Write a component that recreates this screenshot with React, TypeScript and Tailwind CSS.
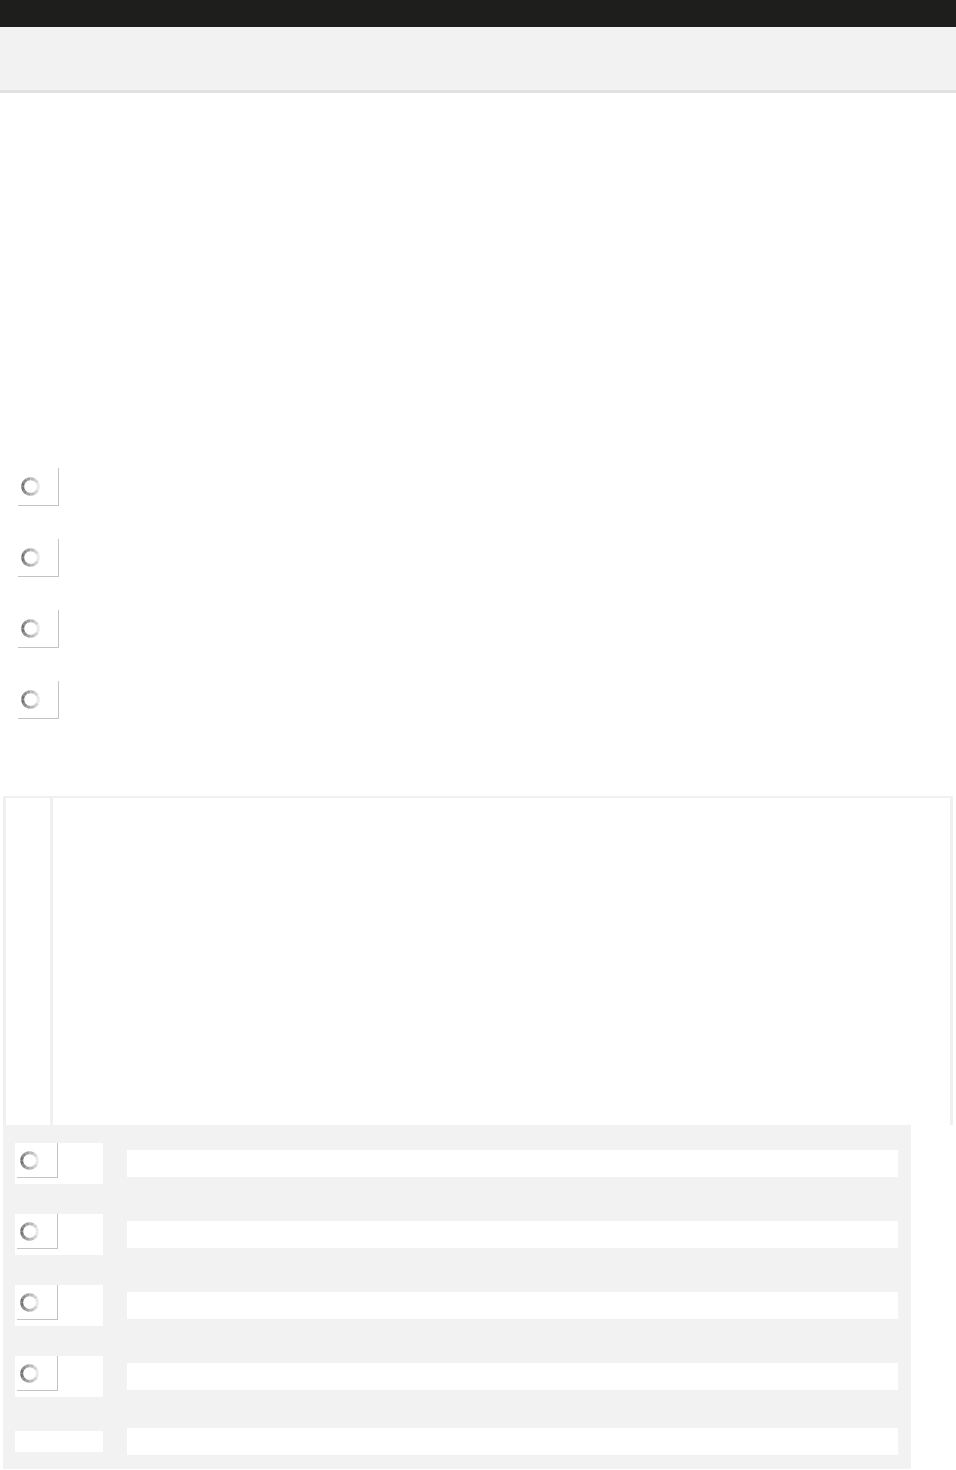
import * as React from "react";

// small gray loading wheel, darker on the left
const Spinner = () => {
  const segs = Array.from({ length: 12 });
  return (
    <svg width="19" height="19" viewBox="0 0 19 19" className="block">
      {segs.map((_, i) => {
        const a0 = (i * 30 * Math.PI) / 180;
        const a1 = ((i * 30 + 30) * Math.PI) / 180;
        const r = 7.8;
        const x0 = 9.5 + r * Math.cos(a0);
        const y0 = 9.5 + r * Math.sin(a0);
        const x1 = 9.5 + r * Math.cos(a1);
        const y1 = 9.5 + r * Math.sin(a1);
        // angle 180deg (left) darkest
        const d = Math.abs(((i * 30 + 15) % 360) - 180) / 180;
        const shade = Math.round(105 + d * 140);
        return (
          <path
            key={i}
            d={`M${x0} ${y0} A${r} ${r} 0 0 1 ${x1} ${y1}`}
            stroke={`rgb(${shade},${shade},${shade})`}
            strokeWidth="3"
            fill="none"
          />
        );
      })}
    </svg>
  );
};

const Loader = ({ short }: { short?: boolean }) => (
  <div
    className={
      "w-[41px] border-r border-b border-[#c3c3c3] flex items-center pl-[3px] " +
      (short ? "h-[35px]" : "h-[38px]")
    }
  >
    <Spinner />
  </div>
);

export default function App() {
  return (
    <div className="w-[956px] min-h-[1470px] bg-white font-['Liberation_Sans',sans-serif]">
      <div className="h-[27px] bg-[#1e1e1c]" />
      <div className="h-[66px] bg-[#f2f2f2] border-b-[3px] border-[#e1e1e1]" />

      <div className="pt-[374px] pl-[18px]">
        {[0, 1, 2, 3].map((i) => (
          <div key={i} className="h-[71px] pt-px">
            <Loader />
          </div>
        ))}
      </div>

      <div className="mt-[45px] mx-[3px] h-[329px] border-x-[3px] border-t-2 border-[#f0f0f0] flex">
        <div className="w-[44px]" />
        <div className="w-[3px] bg-[#f0f0f0]" />
        <div className="flex-1" />
      </div>

      <div className="flex">
        <div className="ml-[3px] w-[908px] bg-[#f2f2f2] pt-[18px] pb-[14px] pl-[12px] pr-[13px] flex flex-col gap-[30px]">
          {[0, 1, 2, 3].map((i) => (
            <div key={i} className="h-[41px] flex items-center">
              <div className="w-[88px] h-[41px] bg-white pl-[2px]">
                <Loader short />
              </div>
              <div className="ml-[24px] flex-1 h-[27px] bg-white" />
            </div>
          ))}
          <div className="h-[28px] flex items-center">
            <div className="w-[88px] h-[21px] bg-white" />
            <div className="ml-[24px] flex-1 h-[27px] bg-white" />
          </div>
        </div>
      </div>
    </div>
  );
}
